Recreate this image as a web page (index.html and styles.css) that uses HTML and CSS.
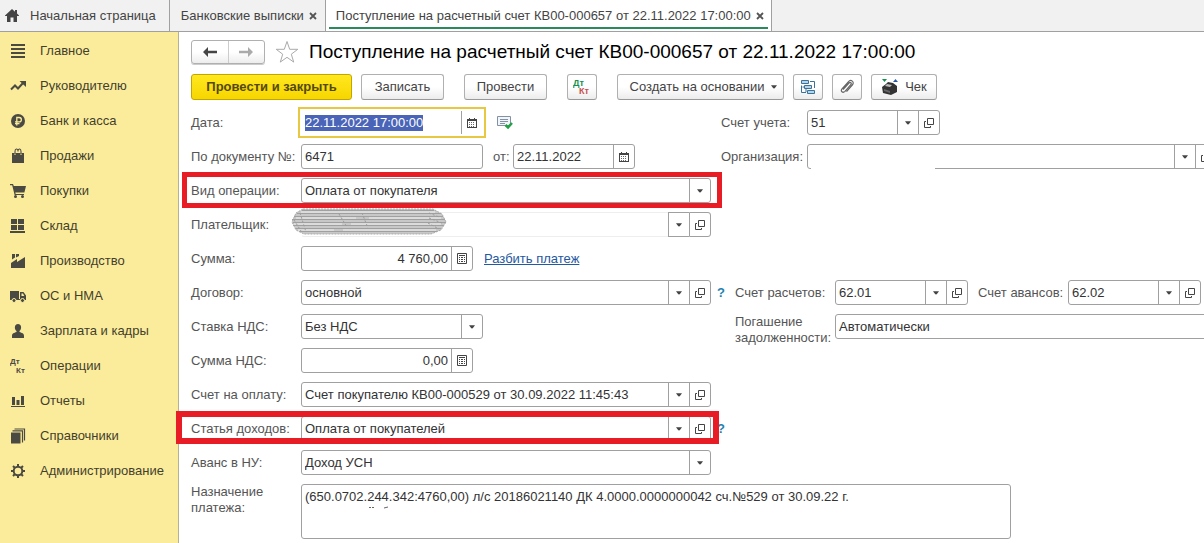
FILE: index.html
```
<!DOCTYPE html>
<html lang="ru">
<head>
    <meta charset="UTF-8">
    <meta name="viewport" content="width=device-width, initial-scale=1.0">
    <title>Поступление на расчетный счет КВ00-000657</title>
    <link rel="stylesheet" href="styles.css">
</head>
<body>
    <!-- shared icons -->
    <svg class="sprite" width="0" height="0">
        <symbol id="caret" viewBox="0 0 7 4"><path d="M0 0h7L5 2.500 3.500 4 2 2.500z"/></symbol>
        <symbol id="open" viewBox="0 0 10 10"><path d="M3.500 .5h6v6h-6zM2 3.500H.5v6h6V8" fill="none" stroke="currentColor"/></symbol>
        <symbol id="calendar" viewBox="0 0 10 10"><path d="M0 1h2V0h1v1h4V0h1v1h2v9H0zM1 3v6h8V3z" fill-rule="evenodd"/><path d="M2 4h1v1H2zM4 4h1v1H4zM6 4h1v1H6zM2 6h1v1H2zM4 6h1v1H4zM6 6h1v1H6zM2 8h1v1H2zM4 8h1v1H4zM6 8h1v1H6z" opacity=".8"/></symbol>
        <symbol id="calc" viewBox="0 0 10 11"><path d="M.5.5h9v10h-9zM2 2.500h6" fill="none" stroke="currentColor"/><path d="M2 4h1v1H2zM4 4h2v1H4zM7 4h1v1H7zM2 6h1v1H2zM4 6h2v1H4zM7 6h1v1H7zM2 8h1v1H2zM4 8h2v1H4zM7 8h1v1H7z"/></symbol>
        <symbol id="cross" viewBox="0 0 8 8"><path d="M1 1l6 6M7 1L1 7" fill="none" stroke="currentColor" stroke-width="1.800"/></symbol>
    </svg>

    <nav class="tabs">
        <a href="#" class="tab tab-home">
            <svg width="14" height="13" viewBox="0 0 14 13"><path d="M7 0l3 2.800V1h2v3.600L14 6.500V7h-2v6H8.500V8.500h-3V13H2V7H0v-.5z"/></svg>
            <span>Начальная страница</span>
        </a>
        <div class="tab">
            <a href="#">Банковские выписки</a>
            <button class="close" aria-label="Закрыть"><svg width="8" height="8"><use href="#cross"/></svg></button>
        </div>
        <div class="tab active">
            <a href="#">Поступление на расчетный счет КВ00-000657 от 22.11.2022 17:00:00</a>
            <button class="close" aria-label="Закрыть"><svg width="8" height="8"><use href="#cross"/></svg></button>
        </div>
    </nav>

    <div class="layout">
        <nav class="sidebar">
            <a href="#"><svg width="16" height="16" viewBox="0 0 16 16"><path d="M1 1h14v2H1zM1 5h14v2H1zM1 9h14v2H1zM1 13h14v2H1z"/></svg>Главное</a>
            <a href="#"><svg width="16" height="16" viewBox="0 0 16 16"><path d="M1 11.500l4-4 3 3 5-5.500" fill="none" stroke="currentColor" stroke-width="2"/><path d="M9.500 3H16v6z"/></svg>Руководителю</a>
            <a href="#"><svg width="16" height="16" viewBox="0 0 16 16"><circle cx="8" cy="8" r="7"/><path d="M6.800 12.500V4.500h2.400a2 2 0 0 1 0 4.300H5M5 10.600h4.500" fill="none" stroke="#fbec9c" stroke-width="1.300"/></svg>Банк и касса</a>
            <a href="#"><svg width="16" height="16" viewBox="0 0 16 16"><path d="M2 5h2.500v2h1V5h5v2h1V5H14v10H2z"/><path d="M5 6V3.500C5 .3 7.400.3 8 2.500 8.600.3 11 .3 11 3.500V6" fill="none" stroke="currentColor" stroke-width="1.100"/></svg>Продажи</a>
            <a href="#"><svg width="16" height="16" viewBox="0 0 16 16"><path d="M0 1h3l.8 2H16l-1.600 6.500H5.300l.4 1.500H14v1H4.600L2.200 2.200H0z"/><circle cx="5.500" cy="13.500" r="1.500"/><circle cx="12.500" cy="13.500" r="1.500"/></svg>Покупки</a>
            <a href="#"><svg width="16" height="16" viewBox="0 0 16 16"><path d="M1 1h6v5H1zM8 1h6v5H8zM1 7h6v5H1zM8 7h6v5H8zM0 13h15v2H0z"/></svg>Склад</a>
            <a href="#"><svg width="16" height="16" viewBox="0 0 16 16"><path d="M1 15v-5l6-4v3l8-5v11zM2 1h3v3.500L2 6.500zM6 1h3v2L6 4.500z"/></svg>Производство</a>
            <a href="#"><svg width="16" height="16" viewBox="0 0 16 16"><path d="M0 3h9v8H0zM10 4h3.500L16 7.500V12h-6zM0 11h16v1H0z"/><path d="M11.500 5.500H13L14.300 8h-2.800z" fill="#fbec9c"/><g stroke="#fbec9c"><circle cx="4" cy="12.500" r="2"/><circle cx="12.500" cy="12.500" r="2"/></g></svg>ОС и НМА</a>
            <a href="#"><svg width="16" height="16" viewBox="0 0 16 16"><path d="M8 1c4 0 3.800 5.500 1.500 7v1c2.500 1 4.500 1 4.500 4v2H2v-2c0-3 2-3 4.500-4V8C4.200 6.500 4 1 8 1z"/></svg>Зарплата и кадры</a>
            <a href="#"><svg class="dtkt" width="16" height="16" viewBox="0 0 16 16"><text x="0" y="6">Дт</text><text x="6" y="15">Кт</text></svg>Операции</a>
            <a href="#"><svg width="16" height="16" viewBox="0 0 16 16"><path d="M2 4h3v8H2zM6.500 7h3v5h-3zM11 3h3v9h-3zM1 13h14v1H1z"/></svg>Отчеты</a>
            <a href="#"><svg width="16" height="16" viewBox="0 0 16 16"><path d="M1 4.500h9.500V15.500H1z"/><path d="M2.500 2.900h10v11.500M4.500 1h10v11.500" fill="none" stroke="currentColor" stroke-width="1.200"/></svg>Справочники</a>
            <a href="#"><svg width="16" height="16" viewBox="0 0 16 16"><circle cx="8" cy="8" r="4.300" fill="none" stroke="currentColor" stroke-width="2"/><path d="M8 1v3M8 12v3M1 8h3M12 8h3M3 3l2 2M11 11l2 2M13 3l-2 2M3 13l2-2" stroke="currentColor" stroke-width="2"/></svg>Администрирование</a>
        </nav>

        <main class="document">
            <header class="heading">
                <div class="history">
                    <button aria-label="Назад"><svg width="14" height="10" viewBox="0 0 14 10"><path d="M0 5l5-5v3.800h9v2.400H5V10z"/></svg></button>
                    <button aria-label="Вперед" class="dim"><svg width="14" height="10" viewBox="0 0 14 10"><path d="M14 5L9 0v3.800H0v2.400h9V10z"/></svg></button>
                </div>
                <svg class="star" width="24" height="24" viewBox="0 0 24 24"><path d="M12 1.500l2.700 7.800h8.100l-6.500 4.900 2.400 7.900L12 17.300l-6.700 4.800 2.400-7.900-6.500-4.900h8.100z"/></svg>
                <h1>Поступление на расчетный счет КВ00-000657 от 22.11.2022 17:00:00</h1>
            </header>

            <div class="toolbar">
                <button class="btn btn-post">Провести и закрыть</button>
                <button class="btn btn-plain">Записать</button>
                <button class="btn btn-plain spaced">Провести</button>
                <button class="btn btn-icon spaced" aria-label="Проводки"><svg class="dtkt big" width="18" height="18" viewBox="0 0 18 18"><text x="0" y="8" fill="#159050">Дт</text><text x="6" y="16" fill="#c9504e">Кт</text></svg></button>
                <button class="btn btn-create spaced">Создать на основании <svg width="6" height="4"><use href="#caret"/></svg></button>
                <button class="btn btn-icon" aria-label="Структура подчиненности"><svg width="16" height="16" viewBox="0 0 16 16"><g fill="#b5d5ec" stroke="#3a7298"><path d="M1.500 1.500h7v3h-7zM4.500 6.500h7v3h-7zM7.500 11.500h7v3h-7z"/></g><path d="M10 2.500h4.500V9M1.500 6.500v7H6M2.500 8h2M6 10v3" fill="none" stroke="#3a7298"/></svg></button>
                <button class="btn btn-icon" aria-label="Файлы"><svg width="16" height="16" viewBox="0 0 16 16"><path d="M4 10.500l6-6.500c1.300-1.300 3 .2 1.800 1.600L6 12.300c-2.200 2.200-5-.2-3-2.500l6.300-7C12-.2 16 3 13.300 6L7.500 12.700" fill="none" stroke="#666" stroke-width="1.200"/></svg></button>
                <button class="btn btn-check"><svg width="18" height="18" viewBox="0 0 18 18"><path d="M1 9l4-3 2-2 5 1 4 3v6l-6 3-8-2z" fill="#333"/><path d="M6 6l5 1-2 2-5-1z" fill="#bbb"/><path d="M3 11l6 2v2l-6-2z" fill="#666"/><path d="M1 1h5L3.500 4z" fill="#159050"/><path d="M12 4h5l-2.500-3z" fill="#2b58a5"/></svg>Чек</button>
            </div>

            <form class="form">
                <div class="row">
                    <div class="left">
                        <label for="date">Дата:</label>
                        <div class="field w-mid focused">
                            <input id="date" type="text" value="22.11.2022 17:00:00">
                            <button type="button" aria-label="Календарь"><svg width="10" height="10"><use href="#calendar"/></svg></button>
                        </div>
                        <svg class="posted" width="16" height="14" viewBox="0 0 16 14"><path d="M.5.5h13v9H.5z" fill="#f2f5f9" stroke="#8391a5"/><path d="M3 3.500h8M3 5.500h8M3 7.500h5" stroke="#8391a5"/><path d="M8.500 9l2.500 2.500L15 7" fill="none" stroke="#23a047" stroke-width="2.500"/></svg>
                    </div>
                    <div class="right">
                        <label for="account" class="l-short">Счет учета:</label>
                        <div class="field w-account">
                            <input id="account" type="text" value="51">
                            <button type="button" aria-label="Выбрать"><svg width="6" height="4"><use href="#caret"/></svg></button>
                            <button type="button" aria-label="Открыть"><svg width="10" height="10"><use href="#open"/></svg></button>
                        </div>
                    </div>
                </div>

                <div class="row">
                    <div class="left">
                        <label for="docnum">По документу №:</label>
                        <div class="field w-mid"><input id="docnum" type="text" value="6471"></div>
                        <label for="docdate" class="l-from">от:</label>
                        <div class="field w-date">
                            <input id="docdate" type="text" value="22.11.2022">
                            <button type="button" aria-label="Календарь"><svg width="10" height="10"><use href="#calendar"/></svg></button>
                        </div>
                    </div>
                    <div class="right">
                        <label for="org" class="l-short">Организация:</label>
                        <div class="field w-rest erased">
                            <input id="org" type="text" value="">
                            <button type="button" aria-label="Выбрать"><svg width="6" height="4"><use href="#caret"/></svg></button>
                            <button type="button" aria-label="Открыть"><svg width="10" height="10"><use href="#open"/></svg></button>
                        </div>
                    </div>
                </div>

                <div class="row marked">
                    <div class="left">
                        <label for="kind">Вид операции:</label>
                        <div class="field w-full">
                            <select id="kind"><option>Оплата от покупателя</option></select>
                            <span class="arrow"><svg width="6" height="4"><use href="#caret"/></svg></span>
                        </div>
                    </div>
                </div>

                <div class="row">
                    <div class="left">
                        <label for="payer">Плательщик:</label>
                        <div class="field w-full payer">
                            <input id="payer" type="text" value="">
                            <button type="button" aria-label="Выбрать"><svg width="6" height="4"><use href="#caret"/></svg></button>
                            <button type="button" aria-label="Открыть"><svg width="10" height="10"><use href="#open"/></svg></button>
                            <svg class="scribble" width="156" height="28" viewBox="0 0 156 28">
                                <path d="M12 1h130l9 5 4 8-5 8-10 4H13l-8-4-4-8 4-9z" fill="#c8c8c8"/>
                                <path d="M11 2.500h132M6 5.500h144M3 8.500h149M1 11.500h153M2 14.500h153M2 17.500h151M4 20.500h146M8 23.500h138" stroke="#a0a0a0"/>
                                <path d="M10 4h134M5 10h60M78 10h72M3 16h48M60 16h90M7 22h36M52 22h93" stroke="#efefef"/>
                                <path d="M12 1h130l9 5 4 8-5 8-10 4H13l-8-4-4-8 4-9z" fill="none" stroke="#aaa" stroke-dasharray="2 1"/>
                                <path d="M138 5l10 4M138 10l13 5M137 15l11 6M48 6l8 13M71 5l6 15M3 12l7 11M9 5l6 19" stroke="#9b9b9b" stroke-dasharray="2 2"/>
                            </svg>
                        </div>
                    </div>
                </div>

                <div class="row">
                    <div class="left">
                        <label for="sum">Сумма:</label>
                        <div class="field w-sum">
                            <input id="sum" type="text" value="4 760,00">
                            <button type="button" aria-label="Калькулятор"><svg width="10" height="11"><use href="#calc"/></svg></button>
                        </div>
                        <a href="#" class="split">Разбить платеж</a>
                    </div>
                </div>

                <div class="row">
                    <div class="left">
                        <label for="contract">Договор:</label>
                        <div class="field w-full">
                            <input id="contract" type="text" value="основной">
                            <button type="button" aria-label="Выбрать"><svg width="6" height="4"><use href="#caret"/></svg></button>
                            <button type="button" aria-label="Открыть"><svg width="10" height="10"><use href="#open"/></svg></button>
                        </div>
                    </div>
                    <div class="right">
                        <a href="#" class="help">?</a>
                        <label for="settle" class="l-settle">Счет расчетов:</label>
                        <div class="field w-account">
                            <input id="settle" type="text" value="62.01">
                            <button type="button" aria-label="Выбрать"><svg width="6" height="4"><use href="#caret"/></svg></button>
                            <button type="button" aria-label="Открыть"><svg width="10" height="10"><use href="#open"/></svg></button>
                        </div>
                        <label for="advance" class="l-advance">Счет авансов:</label>
                        <div class="field w-account">
                            <input id="advance" type="text" value="62.02">
                            <button type="button" aria-label="Выбрать"><svg width="6" height="4"><use href="#caret"/></svg></button>
                            <button type="button" aria-label="Открыть"><svg width="10" height="10"><use href="#open"/></svg></button>
                        </div>
                    </div>
                </div>

                <div class="row">
                    <div class="left">
                        <label for="vat">Ставка НДС:</label>
                        <div class="field w-mid">
                            <select id="vat"><option>Без НДС</option></select>
                            <span class="arrow"><svg width="6" height="4"><use href="#caret"/></svg></span>
                        </div>
                    </div>
                    <div class="right indent">
                        <label for="debt" class="l-settle two-line">Погашение задолженности:</label>
                        <div class="field w-rest"><input id="debt" type="text" value="Автоматически"></div>
                    </div>
                </div>

                <div class="row">
                    <div class="left">
                        <label for="vatsum">Сумма НДС:</label>
                        <div class="field w-sum">
                            <input id="vatsum" type="text" value="0,00">
                            <button type="button" aria-label="Калькулятор"><svg width="10" height="11"><use href="#calc"/></svg></button>
                        </div>
                    </div>
                </div>

                <div class="row">
                    <div class="left">
                        <label for="invoice">Счет на оплату:</label>
                        <div class="field w-full">
                            <input id="invoice" type="text" value="Счет покупателю КВ00-000529 от 30.09.2022 11:45:43">
                            <button type="button" aria-label="Выбрать"><svg width="6" height="4"><use href="#caret"/></svg></button>
                            <button type="button" aria-label="Открыть"><svg width="10" height="10"><use href="#open"/></svg></button>
                        </div>
                    </div>
                </div>

                <div class="row marked marked-income">
                    <div class="left">
                        <label for="income">Статья доходов:</label>
                        <div class="field w-full">
                            <input id="income" type="text" value="Оплата от покупателей">
                            <button type="button" aria-label="Выбрать"><svg width="6" height="4"><use href="#caret"/></svg></button>
                            <button type="button" aria-label="Открыть"><svg width="10" height="10"><use href="#open"/></svg></button>
                        </div>
                    </div>
                    <div class="right"><a href="#" class="help">?</a></div>
                </div>

                <div class="row">
                    <div class="left">
                        <label for="tax">Аванс в НУ:</label>
                        <div class="field w-full">
                            <select id="tax"><option>Доход УСН</option></select>
                            <span class="arrow"><svg width="6" height="4"><use href="#caret"/></svg></span>
                        </div>
                    </div>
                </div>

                <div class="row purpose">
                    <label for="purpose" class="two-line">Назначение платежа:</label>
                    <div class="field area">
                        <textarea id="purpose">(650.0702.244.342:4760,00) л/с 20186021140 ДК 4.0000.0000000042 сч.№529 от 30.09.22 г.</textarea>
                        <svg class="traces" width="22" height="3" viewBox="0 0 22 3"><path d="M0 1.500h2M3 1.500h2M15 2l4-1" stroke="#666"/></svg>
                    </div>
                </div>
            </form>
        </main>
    </div>

    <script>
        const dateInput = document.getElementById('date');
        dateInput.focus();
        dateInput.select();
    </script>
</body>
</html>
```

FILE: styles.css
```
*,
*::after {
    box-sizing: border-box;
}

body {
    margin: 0;
    min-height: 100vh;
    display: flex;
    flex-direction: column;
    overflow: hidden;
    font-family: "Liberation Sans", Arial, sans-serif;
    font-size: 13px;
    line-height: 16px;
    color: #333;
    background: #fff;
}

button,
input,
select,
textarea {
    font: inherit;
    color: inherit;
    margin: 0;
}

button {
    padding: 0;
    cursor: pointer;
}

svg {
    flex: none;
    fill: currentColor;
}

.sprite {
    position: absolute;
}

/* tabs */
.tabs {
    display: flex;
    height: 32px;
    background: #f1f1f1;
    border-bottom: 1px solid #a0a0a0;
}

.tab {
    display: flex;
    align-items: center;
    gap: 5px;
    padding: 0 8px 0 11px;
    border-right: 1px solid #a0a0a0;
    white-space: nowrap;
}

.tab,
.tab a {
    color: #444;
    text-decoration: none;
}

.tab-home {
    gap: 11px;
    padding: 0 13px 0 5px;
}

.tab.active {
    padding: 0 7px 0 10px;
    background: linear-gradient(#2b8a5b, #2b8a5b) center 27px / calc(100% - 6px) 2px no-repeat #fff;
}

.close {
    display: flex;
    border: 0;
    background: none;
    color: #555;
}

/* sidebar */
.layout {
    display: flex;
    flex: 1;
}

.sidebar {
    flex: none;
    width: 179px;
    padding-top: 1px;
    background: #fbec9c;
    border-right: 1px solid #b5b196;
}

.sidebar a {
    display: flex;
    align-items: center;
    gap: 14px;
    height: 35px;
    padding-left: 10px;
    color: #443f2c;
    text-decoration: none;
}

.sidebar svg {
    color: #4b4a42;
}

.dtkt {
    font-size: 8px;
    font-weight: bold;
}

.dtkt.big {
    font-size: 9px;
}

/* document */
.document {
    flex: 1;
    min-width: 0;
    padding: 8px 0 4px 12px;
}

.heading {
    display: flex;
    align-items: center;
    height: 24px;
}

.history {
    display: flex;
    width: 74px;
    height: 24px;
    border: 1px solid #b0b0b0;
    border-radius: 3px;
    background: linear-gradient(#fff 50%, #ededed);
    box-shadow: 0 1px #ccc;
}

.history button {
    display: flex;
    flex: 1;
    align-items: center;
    justify-content: center;
    border: 0;
    background: none;
    color: #444;
}

.history .dim {
    border-left: 1px solid #ccc;
    color: #aaa;
}

.star {
    margin: 0 10px;
    fill: none;
    stroke: #aaa;
}

h1 {
    margin: 0;
    font-size: 19px;
    font-weight: normal;
    line-height: 24px;
    color: #000;
    white-space: nowrap;
}

.toolbar {
    display: flex;
    gap: 9px;
    margin: 10px 0;
}

.btn {
    display: flex;
    align-items: center;
    justify-content: center;
    height: 26px;
    border: 1px solid #b0b0b0;
    border-bottom-color: #999;
    border-radius: 3px;
    background: linear-gradient(#fff 50%, #ececec);
    color: #444;
    white-space: nowrap;
}

.btn-post {
    width: 161px;
    border-color: #c2a500;
    background: linear-gradient(#ffe81f, #f7d600);
    font-weight: bold;
    color: #54480c;
}

.btn-plain {
    width: 83px;
}

.btn-icon {
    width: 30px;
}

.btn-create {
    width: 167px;
    padding-left: 6px;
    gap: 7px;
}

.btn-check {
    width: 66px;
    gap: 6px;
}

.spaced {
    margin-left: 11px;
}

/* form */
.form {
    display: flex;
    flex-direction: column;
    gap: 9px;
}

.row {
    display: flex;
    position: relative;
    height: 25px;
}

.left,
.right {
    display: flex;
    align-items: center;
}

.left {
    flex: none;
    width: 530px;
}

.right {
    flex: 1;
    min-width: 0;
}

label {
    flex: none;
    width: 110px;
    color: #555;
    white-space: nowrap;
}

.l-short {
    width: 86px;
}

.l-from {
    width: 30px;
    padding-left: 10px;
}

.l-settle {
    width: 100px;
}

.l-advance {
    width: 100px;
    padding-left: 10px;
}

.two-line {
    align-self: flex-start;
    white-space: normal;
}

.field {
    display: flex;
    position: relative;
    flex: none;
    height: 25px;
    border: 1px solid #a0a0a0;
    border-radius: 3px;
    background: #fff;
}

.field input,
.field select,
.field textarea {
    flex: 1;
    min-width: 0;
    width: 0;
    padding: 0 3px;
    border: 0;
    outline: 0;
    background: none;
    appearance: none;
}

.field button,
.arrow {
    display: flex;
    flex: none;
    align-items: center;
    justify-content: center;
    width: 21px;
    border: 0;
    border-left: 1px solid #a0a0a0;
    background: none;
    color: #444;
}

.w-mid {
    width: 182px;
}

.w-date {
    width: 122px;
}

.w-sum {
    width: 172px;
}

.w-sum input {
    text-align: right;
}

.w-full {
    width: 410px;
}

.w-account {
    width: 133px;
}

.w-rest {
    flex: 1;
    margin-right: -13px;
}

.focused {
    border-color: transparent;
    border-radius: 0;
    outline: 2px solid #e8c840;
    outline-offset: 1px;
}

.focused ::selection {
    color: #fff;
    background: #4a64b8;
}

.posted {
    margin-left: 14px;
}

.erased::after {
    content: "";
    position: absolute;
    left: 3px;
    bottom: -1px;
    width: 124px;
    height: 1px;
    background: #fff;
}

.payer {
    border-color: #eee;
    border-left-color: transparent;
}

.payer button {
    height: 25px;
    margin-top: -1px;
    border-top: 1px solid #a0a0a0;
    border-bottom: 1px solid #a0a0a0;
}

.payer button:last-of-type {
    width: 22px;
    margin-right: -1px;
    border-right: 1px solid #a0a0a0;
    border-radius: 0 3px 3px 0;
}

.scribble {
    position: absolute;
    left: -11px;
    top: -5px;
}

.split {
    margin-left: 11px;
    color: #2458a0;
}

.help {
    width: 18px;
    margin-left: -4px;
    font-weight: bold;
    color: #2482b0;
    text-decoration: none;
}

.right.indent {
    padding-left: 14px;
}

.marked::after {
    content: "";
    position: absolute;
    left: -9px;
    top: -6px;
    width: 540px;
    height: 36px;
    border: 5px solid #e81c24;
    pointer-events: none;
}

.marked-income::after {
    left: -15px;
    top: -5px;
    width: 543px;
    height: 33px;
    border-width: 6px;
}

.purpose {
    height: 55px;
}

.area {
    width: 710px;
    height: 55px;
}

.field textarea {
    padding: 4px 3px;
    resize: none;
}

.traces {
    position: absolute;
    left: 67px;
    top: 21px;
}
```
